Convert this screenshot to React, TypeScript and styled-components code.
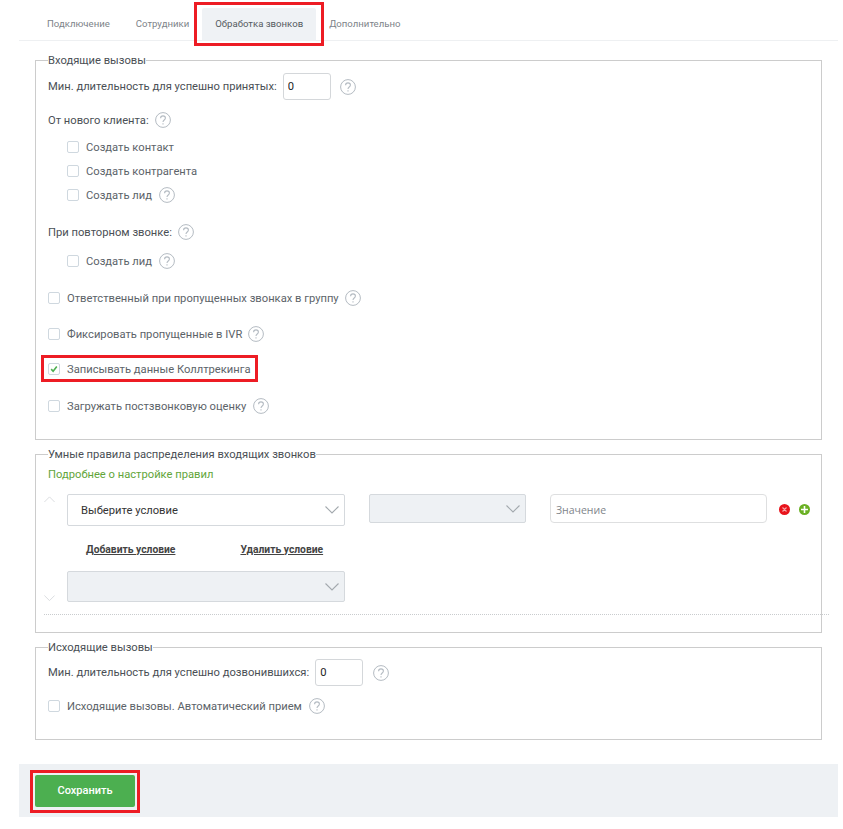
import React from 'react';
import styled, { createGlobalStyle } from 'styled-components';

const GlobalStyle = createGlobalStyle`
  html, body {
    margin: 0;
    padding: 0;
    background: #fff;
    font-family: Roboto, "Liberation Sans", sans-serif;
    font-size: 11.2px;
    color: #4a4f55;
  }
  * {
    box-sizing: border-box;
  }
`;

const RED = '#ed1c24';

const Page = styled.div`
  width: 843px;
  height: 829px;
  padding: 8px 5px 0 19px;
  overflow: hidden;
`;

const TabBar = styled.nav`
  display: flex;
  height: 33px;
  padding-left: 15px;
  border-bottom: 1px solid #eef0f2;
`;

const Tab = styled.a<{ $active?: boolean }>`
  position: relative;
  display: flex;
  align-items: center;
  padding: 0 13px 2px;
  font-size: 9.6px;
  color: ${(p) => (p.$active ? '#555b61' : '#7d8389')};
  background: ${(p) => (p.$active ? '#eff2f5' : 'transparent')};
  border-radius: 2px 2px 0 0;
`;

const Mark = styled.span<{ $t: number; $r: number; $b: number; $l: number }>`
  position: absolute;
  top: ${(p) => p.$t}px;
  right: ${(p) => p.$r}px;
  bottom: ${(p) => p.$b}px;
  left: ${(p) => p.$l}px;
  border: 3px solid ${RED};
  pointer-events: none;
`;

const Group = styled.fieldset<{ $top: number; $height: number }>`
  display: block;
  width: 787px;
  height: ${(p) => p.$height}px;
  margin: ${(p) => p.$top}px 0 0 16px;
  padding: 0 0 0 12px;
  border: 1px solid #ccc;
  min-width: 0;
`;

const Caption = styled.legend`
  padding: 2px 0 0;
  margin: 0;
  line-height: 14px;
  color: #4a4f55;
`;

const Row = styled.div<{ $top: number; $tall?: boolean }>`
  display: flex;
  align-items: center;
  height: ${(p) => (p.$tall ? 27 : 16)}px;
  margin-top: ${(p) => p.$top}px;
`;

const Label = styled.span`
  color: #4a4f55;
  white-space: nowrap;
`;

const CheckRow = styled.label<{ $top: number; $indent?: boolean }>`
  position: relative;
  display: flex;
  width: max-content;
  align-items: center;
  height: 16px;
  margin-top: ${(p) => p.$top}px;
  margin-left: ${(p) => (p.$indent ? 19 : 0)}px;
  color: #5c6369;
  white-space: nowrap;
`;

const Box = styled.span`
  display: flex;
  align-items: center;
  justify-content: center;
  flex: none;
  width: 12px;
  height: 12px;
  margin-right: 7px;
  background: #fff;
  border: 1px solid #cfd8df;
  border-radius: 2px;
`;

const Spin = styled.input`
  width: 48px;
  height: 27px;
  margin-left: 6px;
  padding: 0 4px;
  border: 1px solid #d4d7da;
  border-radius: 3px;
  font: 11.2px Roboto, sans-serif;
  color: #222;
  outline: none;
`;

const HelpWrap = styled.span<{ $gap: number }>`
  display: inline-flex;
  flex: none;
  margin-left: ${(p) => p.$gap}px;
`;

const Help = ({ gap = 6 }: { gap?: number }) => (
  <HelpWrap $gap={gap}>
    <svg width="16" height="16" viewBox="0 0 16 16" fill="none" stroke="#b4bbc2">
      <circle cx="8" cy="8" r="7.4" />
      <path d="M5.6 6.2c0-1.4 1-2.3 2.4-2.3s2.4.9 2.4 2.2c0 1.9-2.4 1.9-2.4 3.9" strokeWidth="1.1" />
      <path d="M8 11.2v1.2" strokeWidth="1.1" />
    </svg>
  </HelpWrap>
);

const Tick = () => (
  <svg width="8" height="8" viewBox="0 0 10 10" fill="none" stroke="#4caf50" strokeWidth="2">
    <path d="M1.5 5.2l2.4 2.6 4.6-6" />
  </svg>
);

const RuleLink = styled.a`
  display: block;
  margin-top: 5px;
  line-height: 16px;
  color: #62a53a;
`;

const Rules = styled.div`
  display: flex;
  height: 108px;
  margin: 11px 0 0 -4px;
`;

const Arrows = styled.div`
  display: flex;
  flex-direction: column;
  justify-content: space-between;
  flex: none;
  width: 23px;
  padding: 2px 0 1px;
`;

const Conditions = styled.div`
  display: flex;
  flex-direction: column;
`;

const ConditionRow = styled.div`
  display: flex;
  align-items: flex-start;
`;

const Select = styled.div<{ $w: number; $h: number; $off?: boolean; $gap?: number }>`
  display: flex;
  align-items: center;
  justify-content: space-between;
  flex: none;
  width: ${(p) => p.$w}px;
  height: ${(p) => p.$h}px;
  margin-left: ${(p) => p.$gap ?? 0}px;
  padding: 0 5px 0 13px;
  color: #333;
  background: ${(p) => (p.$off ? '#eef1f4' : '#fff')};
  border: 1px solid #d5d9dd;
  border-radius: 2px;
`;

const Value = styled.input`
  width: 217px;
  height: 29px;
  margin-left: 24px;
  padding: 2px 5px 0;
  border: 1px solid #dedfe0;
  border-radius: 4px;
  font: 10.5px "Open Sans", sans-serif;
  outline: none;
  &::placeholder {
    color: #80858a;
  }
`;

const RoundBtn = styled.span<{ $bg: string; $gap: number }>`
  display: flex;
  flex: none;
  align-items: center;
  justify-content: center;
  width: 11px;
  height: 11px;
  margin: 10px 0 0 ${(p) => p.$gap}px;
  background: ${(p) => p.$bg};
  border-radius: 50%;
`;

const Actions = styled.div`
  display: flex;
  height: 45px;
  align-items: center;
  padding: 1px 0 0 19px;
`;

const ActionLink = styled.a<{ $gap?: number }>`
  margin-left: ${(p) => p.$gap ?? 0}px;
  font-size: 10.3px;
  font-weight: 700;
  color: #444;
  text-decoration: underline;
`;

const Dotted = styled.div`
  height: 0;
  margin: 12px -8px 0 -4px;
  border-top: 1px dotted #c9ccce;
`;

const Footer = styled.footer`
  display: flex;
  align-items: center;
  height: 53px;
  margin-top: 24px;
  padding-left: 16px;
  background: #eef1f4;
`;

const SaveWrap = styled.div`
  position: relative;
`;

const Save = styled.button`
  display: block;
  width: 100px;
  height: 32px;
  padding: 0;
  border: none;
  border-radius: 2px;
  background: #4caf50;
  color: #fff;
  font: 500 11px Roboto, sans-serif;
`;

const Chevron = ({ up, size = 14, color = '#a3a9ae' }: { up?: boolean; size?: number; color?: string }) => (
  <svg width={size} height={size / 2 + 1} viewBox="0 0 14 8" fill="none" stroke={color} strokeWidth="1.1">
    <path d={up ? 'M0.5 7.5L7 1l6.5 6.5' : 'M0.5 0.5L7 7l6.5-6.5'} />
  </svg>
);

export default function App() {
  return (
    <Page>
      <GlobalStyle />
      <TabBar>
        <Tab>Подключение</Tab>
        <Tab>Сотрудники</Tab>
        <Tab $active>
          Обработка звонков
          <Mark $t={-6} $r={-8} $b={-6} $l={-8} />
        </Tab>
        <Tab>Дополнительно</Tab>
      </TabBar>

      <Group $top={11} $height={388}>
        <Caption>Входящие вызовы</Caption>
        <Row $top={5} $tall>
          <Label>Мин. длительность для успешно принятых:</Label>
          <Spin defaultValue="0" />
          <Help gap={9} />
        </Row>
        <Row $top={12}>
          <Label>От нового клиента:</Label>
          <Help />
        </Row>
        <CheckRow $top={11} $indent>
          <Box />
          Создать контакт
        </CheckRow>
        <CheckRow $top={8} $indent>
          <Box />
          Создать контрагента
        </CheckRow>
        <CheckRow $top={8} $indent>
          <Box />
          Создать лид
          <Help gap={7} />
        </CheckRow>
        <Row $top={21}>
          <Label>При повторном звонке:</Label>
          <Help />
        </Row>
        <CheckRow $top={13} $indent>
          <Box />
          Создать лид
          <Help gap={7} />
        </CheckRow>
        <CheckRow $top={21}>
          <Box />
          Ответственный при пропущенных звонках в группу
          <Help />
        </CheckRow>
        <CheckRow $top={20}>
          <Box />
          Фиксировать пропущенные в IVR
          <Help />
        </CheckRow>
        <CheckRow $top={19}>
          <Box>
            <Tick />
          </Box>
          Записывать данные Коллтрекинга
          <Mark $t={-6} $r={-7} $b={-5} $l={-7} />
        </CheckRow>
        <CheckRow $top={21}>
          <Box />
          Загружать постзвонковую оценку
          <Help gap={7} />
        </CheckRow>
      </Group>

      <Group $top={6} $height={187}>
        <Caption>Умные правила распределения входящих звонков</Caption>
        <RuleLink>Подробнее о настройке правил</RuleLink>
        <Rules>
          <Arrows>
            <Chevron up size={11} color="#d5d8db" />
            <Chevron size={11} color="#d5d8db" />
          </Arrows>
          <Conditions>
            <ConditionRow>
              <Select $w={278} $h={32}>
                Выберите условие
                <Chevron />
              </Select>
              <Select $w={157} $h={29} $off $gap={24}>
                <span />
                <Chevron />
              </Select>
              <Value placeholder="Значение" />
              <RoundBtn $bg="#e8141c" $gap={12}>
                <svg width="7" height="7" viewBox="0 0 7 7" stroke="#f7a6a9" strokeWidth="1.2">
                  <path d="M1.5 1.5l4 4M5.5 1.5l-4 4" />
                </svg>
              </RoundBtn>
              <RoundBtn $bg="#6ab023" $gap={9}>
                <svg width="9" height="9" viewBox="0 0 9 9" stroke="#fff" strokeWidth="1.6">
                  <path d="M4.5 1v7M1 4.5h7" />
                </svg>
              </RoundBtn>
            </ConditionRow>
            <Actions>
              <ActionLink>Добавить условие</ActionLink>
              <ActionLink $gap={65}>Удалить условие</ActionLink>
            </Actions>
            <Select $w={278} $h={31} $off>
              <span />
              <Chevron />
            </Select>
          </Conditions>
        </Rules>
        <Dotted />
      </Group>

      <Group $top={6} $height={101}>
        <Caption>Исходящие вызовы</Caption>
        <Row $top={4} $tall>
          <Label>Мин. длительность для успешно дозвонившихся:</Label>
          <Spin defaultValue="0" />
          <Help gap={10} />
        </Row>
        <CheckRow $top={12}>
          <Box />
          Исходящие вызовы. Автоматический прием
          <Help gap={7} />
        </CheckRow>
      </Group>

      <Footer>
        <SaveWrap>
          <Save>Сохранить</Save>
          <Mark $t={-5} $r={-5} $b={-6} $l={-5} />
        </SaveWrap>
      </Footer>
    </Page>
  );
}
